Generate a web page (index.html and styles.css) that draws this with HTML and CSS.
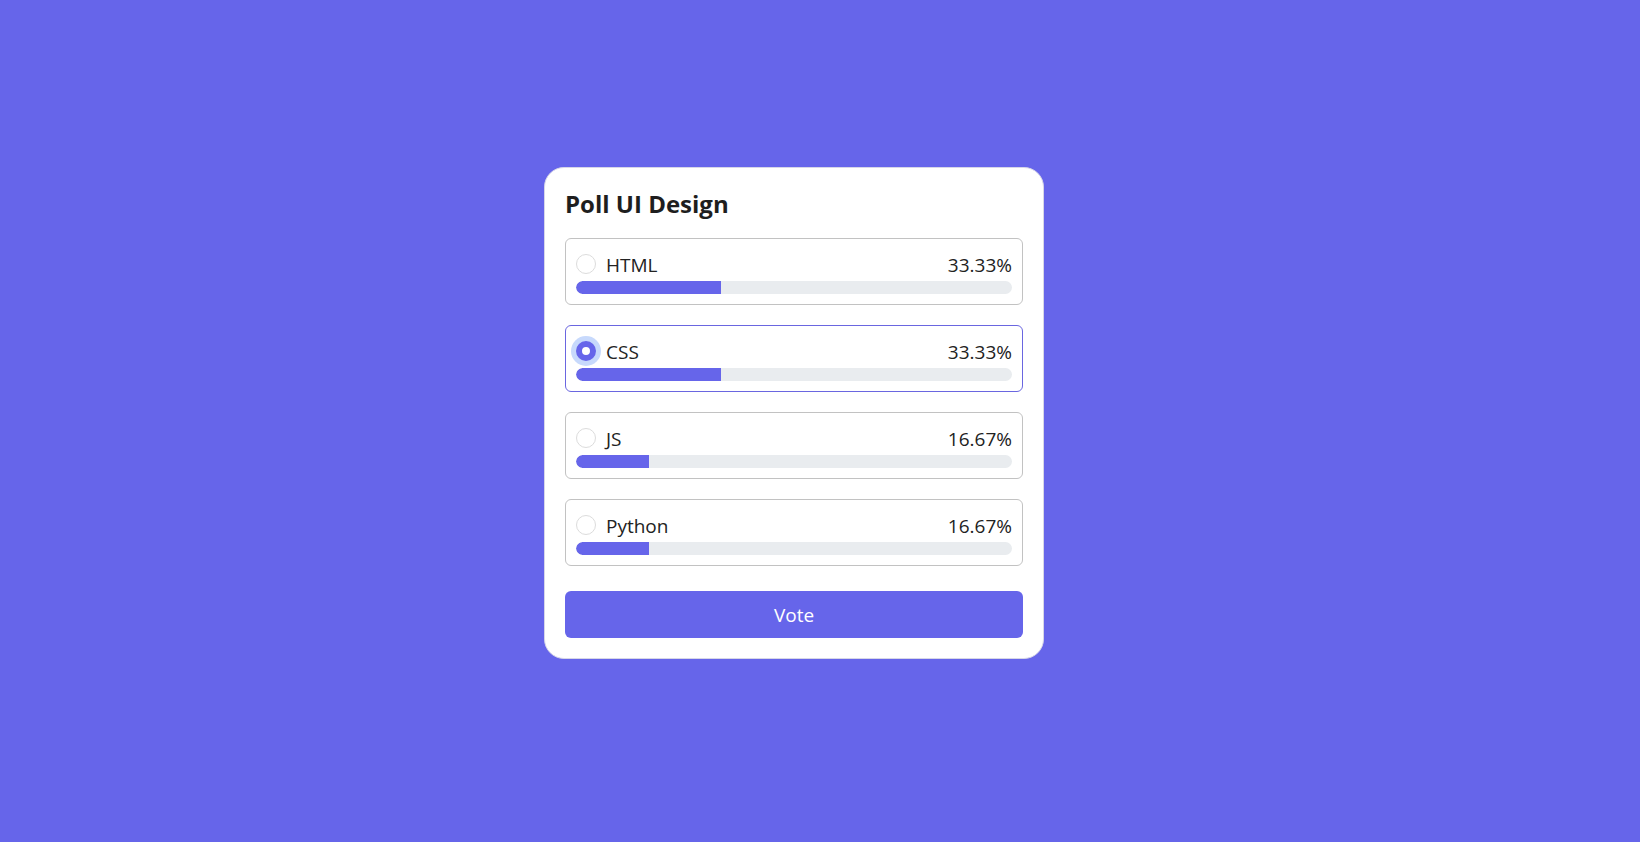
FILE: index.html
```html
<!DOCTYPE html>
<html lang="en">
<head>
<meta charset="utf-8">
<title>Poll UI Design</title>
<link rel="stylesheet" href="styles.css">
</head>
<body>
<div class="stage">
  <div class="card">
    <h1 class="title">Poll UI Design</h1>
    <div class="option">
      <div class="row">
        <span class="radio"></span>
        <span class="label">HTML</span>
        <span class="pct">33.33%</span>
      </div>
      <div class="track"><div class="fill" style="width:33.33%"></div></div>
    </div>
    <div class="option selected">
      <div class="row">
        <span class="radio checked"></span>
        <span class="label">CSS</span>
        <span class="pct">33.33%</span>
      </div>
      <div class="track"><div class="fill" style="width:33.33%"></div></div>
    </div>
    <div class="option">
      <div class="row">
        <span class="radio"></span>
        <span class="label">JS</span>
        <span class="pct">16.67%</span>
      </div>
      <div class="track"><div class="fill" style="width:16.67%"></div></div>
    </div>
    <div class="option">
      <div class="row">
        <span class="radio"></span>
        <span class="label">Python</span>
        <span class="pct">16.67%</span>
      </div>
      <div class="track"><div class="fill" style="width:16.67%"></div></div>
    </div>
    <button class="vote">Vote</button>
  </div>
</div>
</body>
</html>
```
FILE: styles.css
```css
* { box-sizing: border-box; }
html, body { margin: 0; padding: 0; }
body {
  background: #6665ea;
  font-family: "Open Sans", "Noto Sans", sans-serif;
  color: #212529;
}
.stage {
  height: 842px;
  display: flex;
  align-items: flex-start;
  justify-content: flex-start;
  padding: 167px 0 0 544px;
}
.card {
  width: 500px;
  background: #fff;
  border: 1px solid #d6d6e8;
  border-radius: 20px;
  padding: 20px;
  display: flex;
  flex-direction: column;
}
.title {
  margin: 0 0 20px;
  padding-top: 1px;
  height: 30px;
  font-size: 24px;
  line-height: 30px;
  font-weight: 700;
  color: #1e1e1e;
}
.option {
  border: 1px solid #c2c2c2;
  border-radius: 6px;
  padding: 10px;
  margin-bottom: 20px;
}
.option.selected { border-color: #6a66e0; }
.option:last-of-type { margin-bottom: 25px; }
.row {
  display: flex;
  align-items: center;
  height: 27px;
  margin-bottom: 5px;
}
.radio {
  width: 20px;
  height: 20px;
  border-radius: 50%;
  border: 1px solid #dcdcdc;
  margin-right: 10px;
  flex: none;
  position: relative;
  top: 1px;
}
.radio.checked {
  border: 6px solid #6665ea;
  background: #fff;
  box-shadow: 0 0 0 5px #c7d9fc;
}
.label {
  font-size: 19px;
  flex: 1;
  padding-top: 4px;
  color: #222;
}
.pct {
  font-size: 19px;
  padding-top: 4px;
  color: #222;
}
.track {
  height: 13px;
  background: #e9ecef;
  border-radius: 7px;
  overflow: hidden;
}
.fill {
  height: 100%;
  background: #6665ea;
  border-radius: 7px 0 0 7px;
}
.vote {
  height: 47px;
  border: none;
  border-radius: 6px;
  background: #6665ea;
  color: #fff;
  font-family: "Open Sans", "Noto Sans", sans-serif;
  font-size: 19px;
  cursor: pointer;
}
```
